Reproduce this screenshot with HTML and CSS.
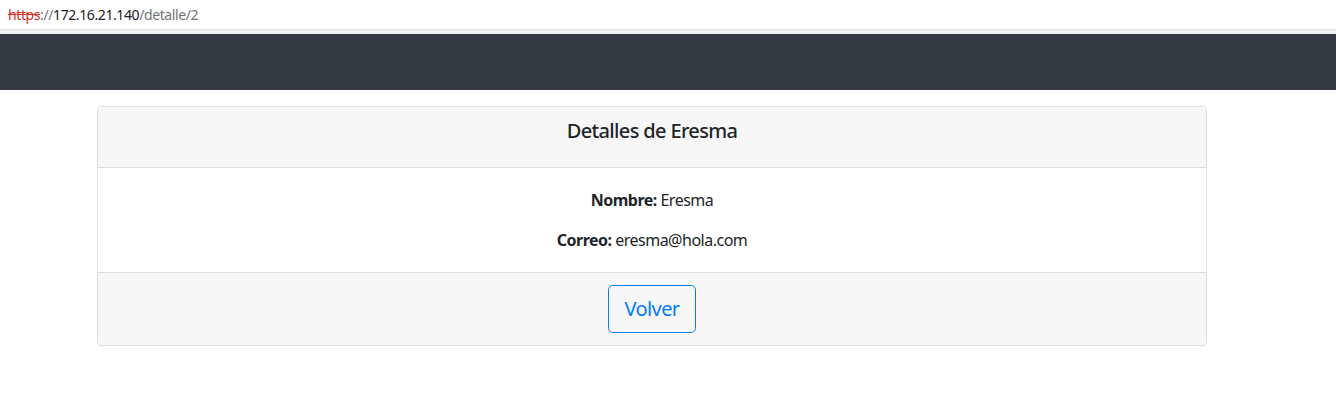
FILE: index.html
```html
<!DOCTYPE html>
<html lang="es">
<head>
<meta charset="utf-8">
<title>Detalle</title>
<link rel="stylesheet" href="styles.css">
</head>
<body>
<div class="addressbar">
  <span class="scheme">https</span><span class="dim">://</span><span class="host">172.16.21.140</span><span class="dim">/detalle/2</span>
</div>
<div class="divider"></div>
<nav class="navbar"></nav>
<main class="page">
  <div class="card">
    <div class="card-header">
      <h5 class="title">Detalles de Eresma</h5>
    </div>
    <div class="card-body">
      <p class="row"><strong>Nombre:</strong> Eresma</p>
      <p class="row last"><strong>Correo:</strong> eresma@hola.com</p>
    </div>
    <div class="card-footer">
      <a class="btn-outline" href="#">Volver</a>
    </div>
  </div>
</main>
</body>
</html>
```
FILE: styles.css
```css
* { box-sizing: border-box; }
html, body {
  margin: 0;
  padding: 0;
  background: #fff;
}
body {
  font-family: "Noto Sans", "Open Sans", "Liberation Sans", sans-serif;
  font-size: 16px;
  line-height: 24px;
  color: #212529;
  letter-spacing: -0.5px;
}
.addressbar {
  height: 29px;
  padding-left: 8px;
  font-size: 14px;
  line-height: 29px;
  color: #202124;
  white-space: nowrap;
  letter-spacing: -0.4px;
}
.scheme {
  color: #d93025;
  text-decoration: line-through;
}
.dim { color: #70757a; }
.host { color: #202124; }
.divider {
  height: 5px;
  background: #efefef;
  border-top: 1px solid #e4e4e4;
}
.navbar {
  height: 56px;
  background: #343a40;
}
.page {
  width: 1304px;
  padding-top: 16px;
  display: flex;
  justify-content: center;
}
.card {
  width: 1110px;
  border: 1px solid #dfdfdf;
  border-radius: 4px;
  overflow: hidden;
  text-align: center;
}
.card-header {
  background: #f7f7f7;
  border-bottom: 1px solid #dfdfdf;
  padding: 12px 20px;
}
.title {
  margin: 0 0 12px;
  font-size: 20px;
  line-height: 24px;
  font-weight: 500;
  letter-spacing: -0.65px;
}
.card-body {
  padding: 20px;
}
.row {
  margin: 0 0 16px;
}
.row.last { margin-bottom: 0; }
.row strong { font-weight: 700; }
.card-footer {
  background: #f7f7f7;
  border-top: 1px solid #dfdfdf;
  padding: 12px 20px;
  display: flex;
  justify-content: center;
}
.btn-outline {
  display: inline-block;
  height: 48px;
  padding: 8px 16px;
  font-size: 20px;
  line-height: 30px;
  color: #007bff;
  border: 1px solid #007bff;
  border-radius: 4.8px;
  text-decoration: none;
  letter-spacing: -0.6px;
}
```
